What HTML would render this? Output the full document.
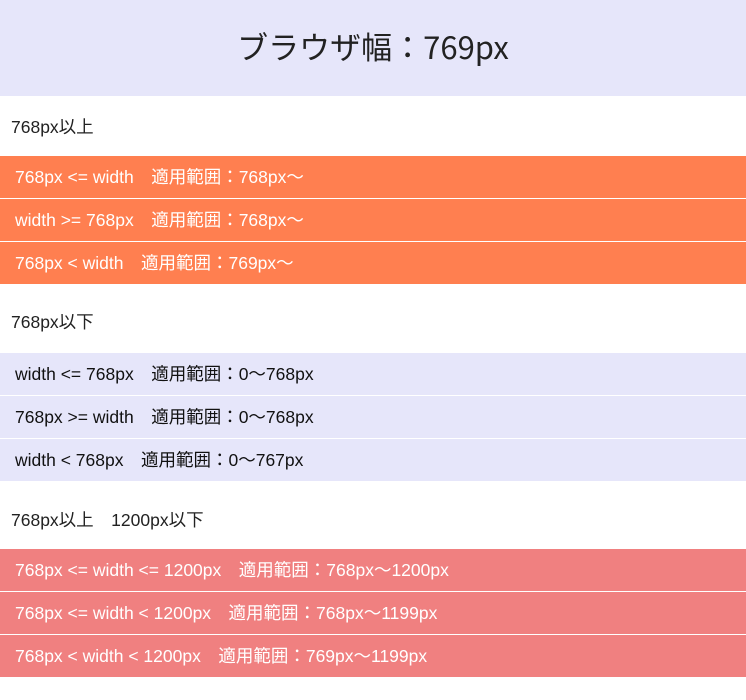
<!DOCTYPE html>
<html><head><meta charset="utf-8"><style>
body{margin:0;width:746px;height:700px;background:#fff;font-family:"Liberation Sans","Noto Sans CJK JP",sans-serif;color:#222;font-size:17.5px}
.hd{height:96px;background:#e6e6fa;display:flex;align-items:center;justify-content:center;font-size:31px;color:#222;font-family:"Noto Sans CJK JP","Liberation Sans",sans-serif;box-sizing:border-box;padding-bottom:6px}
h2{margin:0;font-weight:normal;font-size:17.5px;padding-left:11px;display:flex;align-items:center;box-sizing:border-box}
.r{height:42px;line-height:42px;padding-left:15px;border-bottom:1px solid #fff;box-sizing:content-box}
.o .r{background:#ff7f50;color:#fff}
.l .r{background:#e6e6fa;color:#111}
.c .r{background:#f08080;color:#fff}
</style></head><body>
<div class="hd">ブラウザ幅：769px</div>
<h2 style="height:60px">768px以上</h2>
<div class="o"><div class="r">768px &lt;= width　適用範囲：768px～</div><div class="r">width &gt;= 768px　適用範囲：768px～</div><div class="r" style="border:0">768px &lt; width　適用範囲：769px～</div></div>
<h2 style="height:69px;padding-top:6px">768px以下</h2>
<div class="l"><div class="r">width &lt;= 768px　適用範囲：0～768px</div><div class="r">768px &gt;= width　適用範囲：0～768px</div><div class="r" style="border:0">width &lt; 768px　適用範囲：0～767px</div></div>
<h2 style="height:68px;padding-top:8px">768px以上　1200px以下</h2>
<div class="c"><div class="r">768px &lt;= width &lt;= 1200px　適用範囲：768px～1200px</div><div class="r">768px &lt;= width &lt; 1200px　適用範囲：768px～1199px</div><div class="r" style="border:0">768px &lt; width &lt; 1200px　適用範囲：769px～1199px</div></div>
</body></html>
